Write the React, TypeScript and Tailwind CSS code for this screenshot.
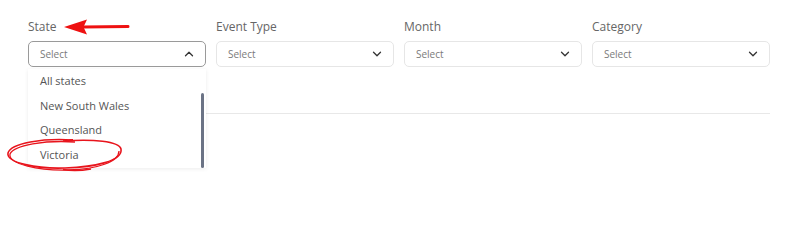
import { ChevronDown, ChevronUp } from "lucide-react";

const filters = [
  { label: "State", open: true },
  { label: "Event Type", open: false },
  { label: "Month", open: false },
  { label: "Category", open: false },
];

const states = ["All states", "New South Wales", "Queensland", "Victoria"];

function RedArrow() {
  return (
    <svg className="absolute left-[62px] top-[19px]" width="70" height="16" viewBox="0 0 70 16">
      <path d="M2 8 L25 0.5 L21.5 8 L25 15.5 Z" fill="#ee1111" />
      <path d="M21 8 L66 7.6" stroke="#ee1111" strokeWidth="3" strokeLinecap="round" />
    </svg>
  );
}

function RedCircle() {
  return (
    <svg className="absolute left-[3px] top-[136px] pointer-events-none" width="124" height="38" viewBox="0 0 124 38">
      <path
        d="M70 4 C40 2 8 7 5 17 C3 27 35 33 62 32 C92 31 120 25 118 13 C116 5 90 3 60 5"
        fill="none"
        stroke="#e8141c"
        strokeWidth="1.6"
      />
      <path
        d="M72 6 C42 4 11 9 7 18 C5 28 36 35 66 34 C94 33 116 26 116 15"
        fill="none"
        stroke="#e8141c"
        strokeWidth="1.3"
      />
      <path d="M60 33.5 C70 35.5 80 34.5 88 33" fill="none" stroke="#e8141c" strokeWidth="1.5" />
    </svg>
  );
}

export default function App() {
  return (
    <div className="relative w-[800px] h-[200px] bg-white font-['Open_Sans',sans-serif]">
      <div className="px-[28px] pt-[18px]">
        <div className="grid grid-cols-4 gap-[10px] w-[742px]">
          {filters.map((f) => (
            <div key={f.label} className="flex flex-col">
              <span className="text-[12px] leading-[18px] text-[#666] mb-[5px]">{f.label}</span>
              <div
                className={`h-[26px] rounded-[5px] border flex items-center justify-between pl-[11px] pr-[9px] ${
                  f.open ? "border-[#9a9a9a]" : "border-[#e6e6e6]"
                }`}
              >
                <span className="text-[10px] text-[#7a7a7a]">Select</span>
                {f.open ? (
                  <ChevronUp size={14} strokeWidth={2.2} className="text-[#333]" />
                ) : (
                  <ChevronDown size={14} strokeWidth={2.2} className="text-[#333]" />
                )}
              </div>
            </div>
          ))}
        </div>
        <div className="mt-[46px] ml-[178px] w-[564px] border-t border-[#e8e8e8]" />
      </div>

      <div className="absolute left-[28px] top-[69px] w-[178px] h-[99px] bg-white shadow-[0_1px_4px_rgba(0,0,0,0.08)]">
        <ul>
          {states.map((s) => (
            <li key={s} className="h-[24.7px] pl-[12px] flex items-center text-[11px] text-[#555]">
              {s}
            </li>
          ))}
        </ul>
        <div className="absolute right-[2px] top-[24px] w-[3px] h-[75px] rounded-full bg-[#6b7385]" />
      </div>

      <RedArrow />
      <RedCircle />
    </div>
  );
}
